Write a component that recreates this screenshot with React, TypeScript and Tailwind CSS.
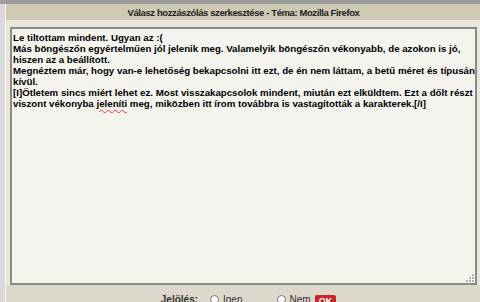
import React from 'react';

const lines = [
  'Le tiltottam mindent. Ugyan az :(',
  'Más böngészőn egyértelműen jól jelenik meg. Valamelyik böngészőn vékonyabb, de azokon is jó,',
  'hiszen az a beállított.',
  'Megnéztem már, hogy van-e lehetőség bekapcsolni itt ezt, de én nem láttam, a betű méret és típusán',
  'kívül.',
  '[I]Ötletem sincs miért lehet ez. Most visszakapcsolok mindent, miután ezt elküldtem. Ezt a dőlt részt',
];

export default function App() {
  return (
    <div className="w-[480px] h-[302px] overflow-hidden bg-[#d4d4d4] flex flex-col" style={{ fontFamily: '"Liberation Sans", Arial, sans-serif' }}>
      {/* top strip */}
      <div className="h-[4px] bg-[#9c9c9c] shrink-0" />
      <div className="flex flex-1 min-h-0">
        <div className="w-[5px] bg-[#d9d9d9] shrink-0" />
        {/* panel */}
        <div className="flex-1 flex flex-col bg-[#ddd8cc] border-l border-r border-[#f6f5f0]">
          <div className="h-[16px] shrink-0 bg-[#cfc9b4] flex items-center justify-center pt-[2px] text-[9.5px] tracking-[-0.4px] font-bold text-[#222] leading-none">
            Válasz hozzászólás szerkesztése - Téma: Mozilla Firefox
          </div>
          <div className="flex-1 flex flex-col bg-[#e9e6dc] pt-[7px] px-[4px]">
            {/* textarea */}
            <div className="relative shrink-0 h-[258px] bg-[#f4f3ee] border-2 border-[#8a8a8a] pl-[1px] pt-[2.5px] text-[9.7px] leading-[11px] font-bold text-black whitespace-nowrap overflow-hidden">
              {lines.map((l, i) => (
                <div key={i}>{l}</div>
              ))}
              <div>
                viszont vékonyba{' '}
                <span className="underline decoration-wavy decoration-red-500 decoration-1 underline-offset-2">jeleníti</span>{' '}
                meg, miközben itt írom továbbra is vastagították a karakterek.[/I]
              </div>
              {/* resize grip */}
              <svg className="absolute right-[1px] bottom-[1px]" width="8" height="8" viewBox="0 0 8 8">
                <rect x="6" y="0" width="2" height="2" fill="#b0b0b0" />
                <rect x="3" y="3" width="2" height="2" fill="#b0b0b0" />
                <rect x="6" y="3" width="2" height="2" fill="#b0b0b0" />
                <rect x="0" y="6" width="2" height="2" fill="#b0b0b0" />
                <rect x="3" y="6" width="2" height="2" fill="#b0b0b0" />
                <rect x="6" y="6" width="2" height="2" fill="#b0b0b0" />
              </svg>
            </div>
            {/* bottom controls, cut off */}
            <div className="flex-1 bg-[#ddd8cc] -mx-[4px] flex justify-center items-start pt-[10px] gap-[4px] text-[10px] font-bold text-[#333] leading-none">
              <span className="ml-[10px]">Jelölés:</span>
              <span className="w-[9px] h-[9px] rounded-full border border-[#777] bg-white ml-[8px]" />
              <span className="font-normal">Igen</span>
              <span className="w-[9px] h-[9px] rounded-full border border-[#777] bg-white ml-[30px]" />
              <span className="font-normal">Nem</span>
              <span className="px-[4px] h-[12px] bg-[#c8242a] text-white rounded-[2px] text-[9px] flex items-center">OK</span>
            </div>
          </div>
        </div>
        <div className="w-[6px] bg-[#d9d9d9] shrink-0" />
      </div>
    </div>
  );
}
